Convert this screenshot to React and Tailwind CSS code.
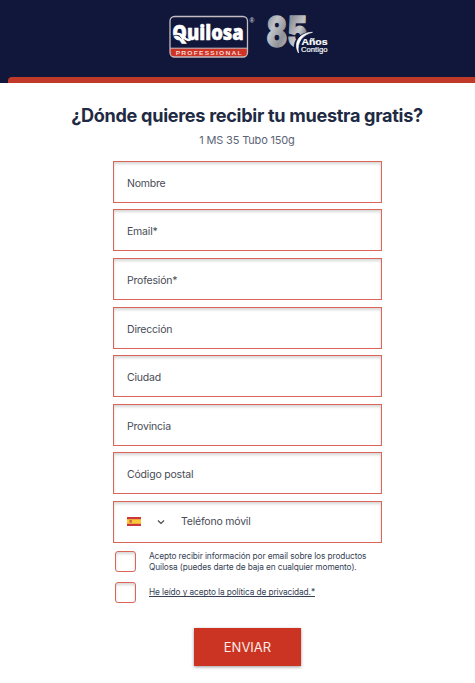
import { useState } from "react";

const fields = [
  { name: "nombre", placeholder: "Nombre" },
  { name: "email", placeholder: "Email*" },
  { name: "profesion", placeholder: "Profesión*" },
  { name: "direccion", placeholder: "Dirección" },
  { name: "ciudad", placeholder: "Ciudad" },
  { name: "provincia", placeholder: "Provincia" },
  { name: "codigoPostal", placeholder: "Código postal" },
];

const QuilosaLogo = () => (
  <svg width="88" height="44" viewBox="0 0 88 44" className="block overflow-visible">
    <defs>
      <clipPath id="badge">
        <rect x="2" y="2.5" width="77.5" height="40.5" rx="4.5" />
      </clipPath>
    </defs>
    <rect x="2" y="2.5" width="77.5" height="40.5" rx="4.5" fill="#10173a" />
    <rect x="1" y="34.3" width="79" height="9" fill="#cf3325" clipPath="url(#badge)" />
    <path d="M2 34.2H79.5" stroke="#d9d2d3" strokeWidth="0.9" />
    <rect x="2" y="2.5" width="77.5" height="40.5" rx="4.5" fill="none" stroke="#c3bcc0" strokeWidth="1.3" />
    <text x="4.300" y="26" textLength="71.500" lengthAdjust="spacingAndGlyphs" fontFamily="Open Sans, sans-serif" fontWeight="800" fontSize="21" fill="#fff" stroke="#fff" strokeWidth="0.5">Quilosa</text>
    <path d="M7 21C11 18.500 13.500 20.500 16 23.500C18 26 20 26.500 22.500 25.500" fill="none" stroke="#fff" strokeWidth="2.400" />
    <path d="M4.500 22.500C9 20 11.500 22 13.500 24.500" fill="none" stroke="#10173a" strokeWidth="0.9" />
    <text x="7.700" y="40.700" textLength="67" lengthAdjust="spacingAndGlyphs" fontFamily="Liberation Sans, sans-serif" fontWeight="700" fontSize="5.600" fill="#f4d7d2" letterSpacing="1">PROFESSIONAL</text>
    <text x="81.500" y="8.800" fontFamily="Liberation Sans, sans-serif" fontSize="6.500" fontWeight="700" fill="#c3c5d0">®</text>
  </svg>
);

const AnniversaryLogo = () => (
  <svg width="64" height="44" viewBox="0 0 64 44" className="block overflow-visible">
    <defs>
      <linearGradient id="silver" x1="0" y1="0" x2="1" y2="0.6">
        <stop offset="0" stopColor="#74767f" />
        <stop offset="0.3" stopColor="#c2c3c7" />
        <stop offset="0.55" stopColor="#8f9198" />
        <stop offset="0.8" stopColor="#c5c6ca" />
        <stop offset="1" stopColor="#63656f" />
      </linearGradient>
    </defs>
    <text x="1.500" y="33" textLength="41" lengthAdjust="spacingAndGlyphs" fontFamily="Inter, sans-serif" fontWeight="900" fontSize="42" fill="url(#silver)" stroke="url(#silver)" strokeWidth="1.400">85</text>
    <path d="M30.500 39C25.500 28 34 18 47 17.500L64 22V44H32Z" fill="#10173a" />
    <path d="M33.500 39C28 29 34 18.500 47.500 18.300C38 20.500 31.500 28 33.500 39Z" fill="#fff" stroke="#fff" strokeWidth="0.6" />
    <text x="36.500" y="31" textLength="26" lengthAdjust="spacingAndGlyphs" fontFamily="Liberation Sans, sans-serif" fontWeight="700" fontSize="9" fill="#fff" stroke="#fff" strokeWidth="0.2">Años</text>
    <text x="36" y="37.800" textLength="26.500" lengthAdjust="spacingAndGlyphs" fontFamily="Liberation Sans, sans-serif" fontSize="7" fill="#fff" stroke="#fff" strokeWidth="0.15">Contigo</text>
  </svg>
);

const SpainFlag = () => (
  <svg width="14" height="9" viewBox="0 0 14 9" className="block">
    <rect width="14" height="9" fill="#c9363c" />
    <rect y="2.200" width="14" height="4.600" fill="#fbc83a" />
    <rect x="2.500" y="3" width="2.400" height="2.800" rx="0.600" fill="#c46a35" />
  </svg>
);

const Checkbox = ({ checked, onChange, label }) => (
  <input
    type="checkbox"
    aria-label={label}
    checked={checked}
    onChange={onChange}
    className="block size-[21px] shrink-0 appearance-none rounded-[3px] border border-[#db6558] bg-white shadow-[inset_0_2px_3px_rgba(0,0,0,0.16)] checked:bg-[#cb3422]"
  />
);

const App = () => {
  const [values, setValues] = useState({});
  const [newsletter, setNewsletter] = useState(false);
  const [privacy, setPrivacy] = useState(false);

  const handleChange = (event) => {
    setValues({ ...values, [event.target.name]: event.target.value });
  };

  const handleSubmit = (event) => {
    event.preventDefault();
  };

  return (
    <div className="min-h-screen overflow-hidden bg-white font-[Inter,sans-serif] text-[#1f2a44]">
      <header className="h-[83px] bg-[#10173a]">
        <div className="flex h-[77px] items-start gap-[9px] pt-[14px] pl-[168px]">
          <QuilosaLogo />
          <AnniversaryLogo />
        </div>
        <div className="ml-2 h-[6px] rounded-tl-[4px] bg-[#c13a29]"></div>
      </header>

      <main className="pt-[20px] pl-[19px]">
        <h1 className="text-center text-[18.100px] leading-6 font-bold tracking-[-0.300px] whitespace-nowrap">
          ¿Dónde quieres recibir tu muestra gratis?
        </h1>
        <p className="mt-[5px] text-center text-[11px] leading-4 tracking-[-0.170px] text-[#5c6475]">
          1 MS 35 Tubo 150g
        </p>

        <form onSubmit={handleSubmit} className="mt-[12.750px] ml-[94px] w-[269px]">
          <div className="flex flex-col gap-[6.600px]">
            {fields.map((field) => (
              <input
                key={field.name}
                name={field.name}
                value={values[field.name] || ""}
                onChange={handleChange}
                placeholder={field.placeholder}
                className="block h-[42px] w-full border border-[#db6558] bg-white px-[13px] pt-[3px] text-[10.500px] tracking-[-0.200px] shadow-[inset_0_2px_3px_rgba(0,0,0,0.16)] outline-none placeholder:text-[#484b55]"
              />
            ))}
            <div className="flex h-[42px] items-center border border-[#db6558] pl-[13px] shadow-[inset_0_2px_3px_rgba(0,0,0,0.16)]">
              <SpainFlag />
              <svg width="8" height="6" viewBox="0 0 8 6" className="ml-[16px] block">
                <path d="M1 1.500L4 4.500L7 1.500" fill="none" stroke="#484b55" strokeWidth="1.200" />
              </svg>
              <input
                name="telefono"
                value={values.telefono || ""}
                onChange={handleChange}
                placeholder="Teléfono móvil"
                className="ml-[16px] min-w-0 flex-1 bg-transparent text-[10.500px] tracking-[-0.200px] outline-none placeholder:text-[#484b55]"
              />
            </div>
          </div>

          <div className="mt-[8px] ml-[2.250px] flex items-center gap-[12.750px]">
            <Checkbox label="Newsletter" checked={newsletter} onChange={() => setNewsletter(!newsletter)} />
            <p className="text-[8.300px] leading-[11px] tracking-[-0.100px] whitespace-nowrap text-[#363f54]">
              Acepto recibir información por email sobre los productos
              <br />
              Quilosa (puedes darte de baja en cualquier momento).
            </p>
          </div>
          <div className="mt-[9.500px] ml-[2.250px] flex items-center gap-[12.750px]">
            <Checkbox label="Privacidad" checked={privacy} onChange={() => setPrivacy(!privacy)} />
            <a
              href="#privacidad"
              className="text-[8.300px] leading-[11px] tracking-[-0.100px] whitespace-nowrap text-[#363f54] underline"
            >
              He leído y acepto la política de privacidad.*
            </a>
          </div>

          <button
            type="submit"
            className="mt-[25px] ml-[81px] block h-[38px] w-[107px] bg-[#cb3422] text-[13px] text-[#fdebe7] shadow-[0_1px_3px_rgba(0,0,0,0.4)]"
          >
            ENVIAR
          </button>
        </form>
      </main>
    </div>
  );
};

export default App;
